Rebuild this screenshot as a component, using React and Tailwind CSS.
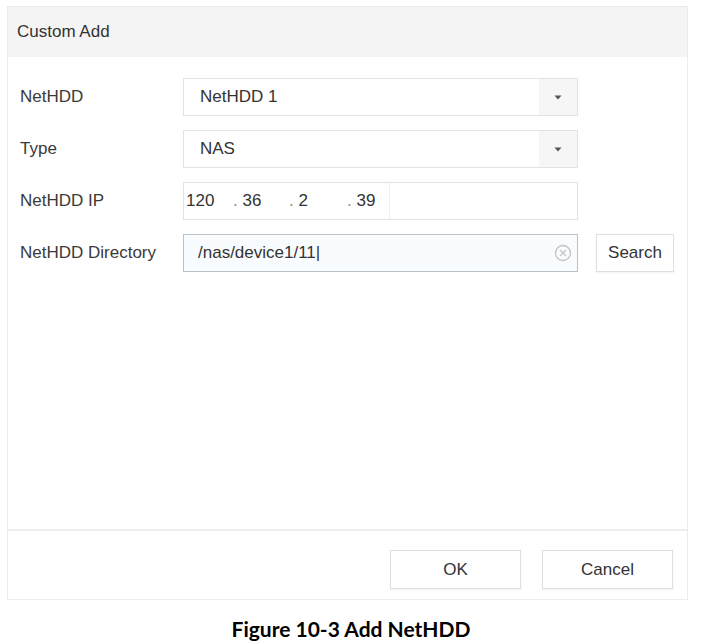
import React from "react"

const arial = { fontFamily: '"Liberation Sans", Arial, sans-serif' }

function Caret() {
  return (
    <div className="w-[38px] h-full bg-[#f6f6f6] flex items-center justify-center">
      <svg width="8" height="5" viewBox="0 0 8 5">
        <path d="M0.5 0.5 L7.5 0.5 L4 4.5 Z" fill="#555" />
      </svg>
    </div>
  )
}

function Campo({ label, children }) {
  return (
    <div className="flex items-center h-[38px]">
      <div className="w-[163px] text-[17px] text-[#3a3a3a]">{label}</div>
      {children}
    </div>
  )
}

export default function App() {
  return (
    <div className="w-[702px] h-[642px] bg-white relative overflow-hidden" style={arial}>
      {/* JANELA */}
      <div className="ml-[7px] mt-[6px] w-[681px] h-[594px] border border-[#ececec] flex flex-col bg-white">
        <div className="h-[50px] bg-[#f4f4f4] flex items-center pl-[9px] text-[17px] text-[#333]">Custom Add</div>

        <div className="flex-1 pl-[12px] pt-[21px] flex flex-col gap-[14px] border-b-2 border-[#ededed]">
          <Campo label="NetHDD">
            <div className="w-[395px] h-[38px] border border-[#e2e2e2] flex items-center">
              <span className="flex-1 pl-[16px] text-[17px] text-[#333]">NetHDD 1</span>
              <Caret />
            </div>
          </Campo>

          <Campo label="Type">
            <div className="w-[395px] h-[38px] border border-[#e2e2e2] flex items-center">
              <span className="flex-1 pl-[16px] text-[17px] text-[#333]">NAS</span>
              <Caret />
            </div>
          </Campo>

          <Campo label="NetHDD IP">
            <div className="w-[395px] h-[38px] border border-[#e2e2e2] flex items-center text-[17px] text-[#333]">
              <span className="w-[49px] pl-[2px]">120</span>
              <span className="w-[56px]"><span className="text-[#888]">.</span> 36</span>
              <span className="w-[58px]"><span className="text-[#888]">.</span> 2</span>
              <span className="w-[43px] h-full flex items-center border-r border-[#efefef]"><span className="text-[#888]">.</span>&nbsp;39</span>
            </div>
          </Campo>

          <Campo label="NetHDD Directory">
            <div className="w-[395px] h-[38px] border border-[#b9c2cb] bg-[#f9fcfe] flex items-center">
              <span className="flex-1 pl-[14px] text-[17px] text-[#333]">/nas/device1/11|</span>
              <svg width="18" height="18" viewBox="0 0 18 18" className="mr-[5px]">
                <circle cx="9" cy="9" r="7.5" fill="none" stroke="#c4c4c4" strokeWidth="1.3" />
                <path d="M6 6 L12 12 M12 6 L6 12" stroke="#c4c4c4" strokeWidth="1.3" />
              </svg>
            </div>
            <button className="ml-[18px] w-[78px] h-[38px] border border-[#e0e0e0] bg-white text-[17px] text-[#333] shadow-[0_1px_2px_rgba(0,0,0,0.06)]">Search</button>
          </Campo>
        </div>

        <div className="h-[68px] flex justify-end items-start pt-[19px] pr-[14px] gap-[21px]">
          <button className="w-[131px] h-[39px] border border-[#dedede] bg-white text-[17px] text-[#333] shadow-[0_1px_2px_rgba(0,0,0,0.06)]">OK</button>
          <button className="w-[131px] h-[39px] border border-[#dedede] bg-white text-[17px] text-[#333] shadow-[0_1px_2px_rgba(0,0,0,0.06)]">Cancel</button>
        </div>
      </div>

      {/* LEGENDA */}
      <div className="mt-[18px] text-center text-[21px] leading-none font-bold text-black" style={{ fontFamily: 'Lato, "Open Sans", sans-serif' }}>
        Figure 10-3 Add NetHDD
      </div>
    </div>
  )
}
